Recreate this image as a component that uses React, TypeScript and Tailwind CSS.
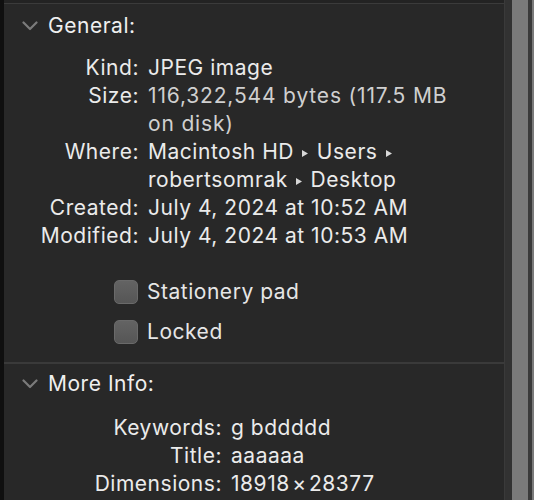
import React from "react";

const rowsGeneral: { label: string; value: React.ReactNode; dim?: boolean }[] = [
  { label: "Kind:", value: "JPEG image" },
  {
    label: "Size:",
    value: (
      <>
        116,322,544 bytes (117.5 MB
        <br />
        on disk)
      </>
    ),
    dim: true,
  },
  {
    label: "Where:",
    value: (
      <>
        Macintosh HD <Tri /> Users <Tri />
        <br />
        robertsomrak <Tri /> Desktop
      </>
    ),
  },
  { label: "Created:", value: "July 4, 2024 at 10:52 AM" },
  { label: "Modified:", value: "July 4, 2024 at 10:53 AM" },
];

const rowsMore = [
  { label: "Keywords:", value: "g bddddd" },
  { label: "Title:", value: "aaaaaa" },
  { label: "Dimensions:", value: "18918\u200a\u00d7\u200a28377" },
];

function Tri() {
  return (
    <svg width="8" height="9" viewBox="0 0 8 9" className="inline-block mx-[1px] align-[1px]">
      <path d="M1 1 L7 4.5 L1 8 Z" fill="#d8d8d8" />
    </svg>
  );
}

function Chevron() {
  return (
    <svg width="16" height="10" viewBox="0 0 16 10" className="shrink-0">
      <path d="M1.5 1.5 L8 8 L14.5 1.5" fill="none" stroke="#7b7b7b" strokeWidth="2.2" strokeLinecap="round" strokeLinejoin="round" />
    </svg>
  );
}

function Checkbox({ label }: { label: string }) {
  return (
    <div className="flex items-center h-[24px] pl-[110px] gap-[9px]">
      <div className="w-[24px] h-[24px] rounded-[5px] bg-gradient-to-b from-[#636363] to-[#565656] border border-[#6a6a6a]" />
      <span className="text-[#e6e6e6]">{label}</span>
    </div>
  );
}

export default function App() {
  return (
    <div className="w-[534px] h-[500px] bg-[#282828] flex overflow-hidden text-[21px] leading-[28px] tracking-[0.025em] font-['Inter','Liberation_Sans',sans-serif]">
      <div className="w-[4px] bg-[#0f0f0f]" />
      <div className="w-[500px] flex flex-col">
        <div className="h-[4px] bg-[#232323] border-b border-[#3b3b3b]" />

        {/* General */}
        <div className="flex items-center gap-[10px] pl-[18px] mt-[8px]">
          <Chevron />
          <span className="text-[#efefef]">General:</span>
        </div>
        <div className="flex flex-col mt-[14px]">
          {rowsGeneral.map((r) => (
            <div key={r.label} className="flex gap-[9px]">
              <div className="w-[135px] text-right text-[#ebebeb] shrink-0">{r.label}</div>
              <div className={r.dim ? "text-[#d0d0d0] tracking-[0.04em]" : "text-[#ebebeb]"}>{r.value}</div>
            </div>
          ))}
        </div>

        <div className="flex flex-col gap-[16px] mt-[30px]">
          <Checkbox label="Stationery pad" />
          <Checkbox label="Locked" />
        </div>

        <div className="h-[2px] bg-[#3a3a3a] mt-[18px]" />

        {/* More Info */}
        <div className="flex items-center gap-[10px] pl-[18px] mt-[6px]">
          <Chevron />
          <span className="text-[#efefef]">More Info:</span>
        </div>
        <div className="flex flex-col mt-[16px]">
          {rowsMore.map((r) => (
            <div key={r.label} className="flex gap-[9px]">
              <div className="w-[218px] text-right text-[#ebebeb] shrink-0">{r.label}</div>
              <div className="text-[#ebebeb]">{r.value}</div>
            </div>
          ))}
        </div>
      </div>
      <div className="w-[1px] bg-[#3a3a3a]" />
      <div className="w-[7px] bg-[#323232]" />
      <div className="w-[16px] bg-[#7a7a7a]" />
      <div className="w-[4px] bg-[#3a3a3a]" />
      <div className="w-[2px] bg-[#7a7a7a]" />
    </div>
  );
}
